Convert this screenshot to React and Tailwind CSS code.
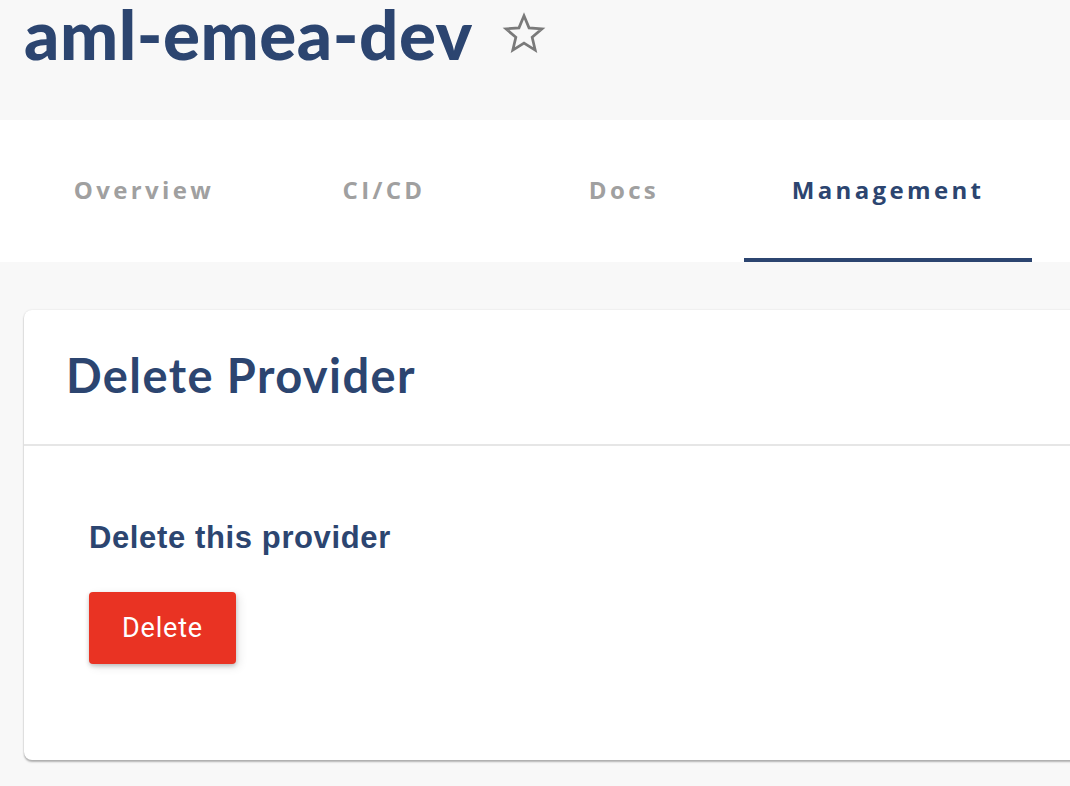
import React from 'react';

const tabs = ['Overview', 'CI/CD', 'Docs', 'Management'];

const StarIcon = () => (
  <svg width="44" height="44" viewBox="0 0 24 24" fill="none" stroke="#7a7a7a" strokeWidth="1.5" strokeLinejoin="miter">
    <path d="M12 2.6l2.75 6.6 7.05.55-5.35 4.6 1.65 6.95L12 17.55 5.9 21.3l1.65-6.95-5.35-4.6 7.05-.55z" />
  </svg>
);

const App = () => {
  const active = 'Management';

  return (
    <div className="w-[1070px] h-[786px] overflow-hidden bg-[#f8f8f8] font-['Lato',sans-serif]">
      {/* Header */}
      <div className="h-[120px] flex items-start pl-[24px]">
        <h1 className="text-[69px] leading-[68px] font-black text-[#2c4570] tracking-[0.008em]">aml-emea-dev</h1>
        <div className="ml-[29px] mt-[11px]">
          <StarIcon />
        </div>
      </div>

      {/* Tabs */}
      <div className="h-[142px] bg-white flex pl-[24px]">
        {tabs.map((tab) => (
          <div
            key={tab}
            className={`flex flex-col ${tab === 'Management' ? 'w-[288px]' : 'w-[240px]'}`}
          >
            <div
              className={`flex-1 flex items-center justify-center text-[24px] font-bold tracking-[0.14em] font-['Open_Sans',sans-serif] pt-[2px] ${
                tab === active ? 'text-[#2c4570]' : 'text-[#a0a0a0]'
              }`}
            >
              {tab}
            </div>
            <div className={`h-[4px] ${tab === active ? 'bg-[#2c4570]' : ''}`} />
          </div>
        ))}
      </div>

      {/* Content */}
      <div className="pl-[24px] pt-[48px]">
        <div className="w-[1100px] h-[450px] bg-white rounded-[8px] shadow-[0_2px_2px_rgba(0,0,0,0.28),0_0_2px_rgba(0,0,0,0.12)]">
          <div className="h-[136px] flex items-center pl-[42px] border-b-2 border-[#e6e6e6]">
            <h2 className="text-[47px] font-bold text-[#2c4570] tracking-[0.03em] pb-[4px]">Delete Provider</h2>
          </div>
          <div className="pl-[65px] pt-[72px]">
            <h3 className="text-[31px] leading-[40px] font-bold text-[#2c4570] tracking-[0.02em] font-['Liberation_Sans',sans-serif]">
              Delete this provider
            </h3>
            <button className="mt-[34px] w-[147px] h-[72px] bg-[#e93323] rounded-[4px] text-white text-[27px] font-normal font-['Roboto',sans-serif] tracking-[0.03em] shadow-[0_2px_4px_rgba(0,0,0,0.2),3px_3px_10px_rgba(0,0,0,0.1)]">
              Delete
            </button>
          </div>
        </div>
      </div>
    </div>
  );
};

export default App;
